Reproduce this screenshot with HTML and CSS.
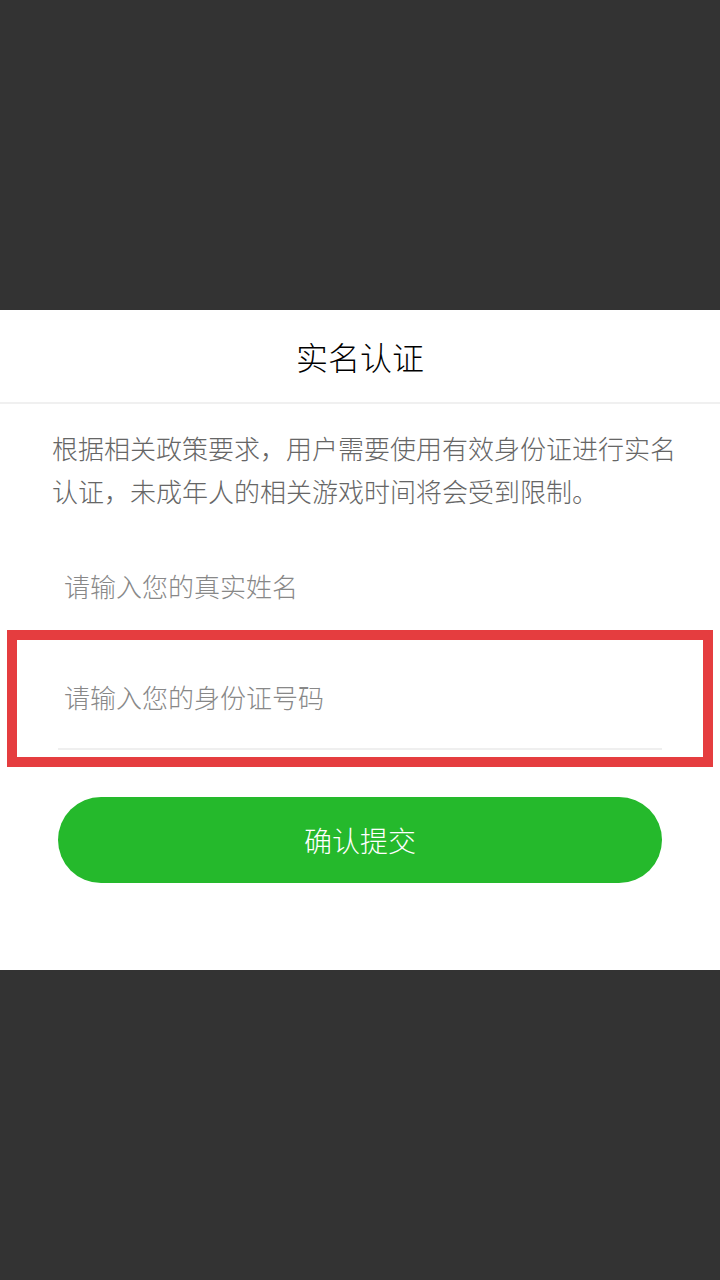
FILE: index.html
```html
<!doctype html>
<html lang="zh-CN">
<head>
    <meta charset="UTF-8" />
    <title>实名认证</title>
    <link rel="stylesheet" href="styles.css">
</head>
<body>

<div class="mask">
	<div class="dialog">
		<div class="dialog-title">实名认证</div>
		<p class="notice">根据相关政策要求，用户需要使用有效身份证进行实名认证，未成年人的相关游戏时间将会受到限制。</p>

		<div class="form">
			<div class="field">
				<input type="text" placeholder="请输入您的真实姓名">
			</div>
			<div class="highlight">
				<div class="field field-line">
					<input type="text" placeholder="请输入您的身份证号码">
				</div>
			</div>
			<button class="submit-btn">确认提交</button>
		</div>
	</div>
</div>

</body>
</html>
```

FILE: styles.css
```css
body {
	margin: 0;
	font-family: "Noto Sans CJK SC", "Noto Sans", sans-serif;
	font-weight: 300;
	background-color: #333333;
}
.mask {
	height: 1280px;
	padding-top: 310px;
	box-sizing: border-box;
}
.dialog {
	background-color: #ffffff;
	padding-bottom: 87px;
}
.dialog-title {
	height: 92px;
	line-height: 92px;
	text-align: center;
	font-size: 32px;
	color: #000000;
	border-bottom: 2px solid #f0f0f0;
}
.notice {
	margin: 0;
	padding: 22px 40px 0 52px;
	font-size: 26px;
	line-height: 43px;
	color: #666666;
}
.form {
	padding: 28px 58px 0 58px;
}
.field {
	height: 90px;
	display: flex;
	align-items: center;
}
.field input {
	width: 100%;
	border: none;
	outline: none;
	padding: 0 0 0 6px;
	font-family: "Noto Sans CJK SC", "Noto Sans", sans-serif;
	font-weight: 300;
	font-size: 26px;
	color: #333333;
	background: transparent;
}
.field input::placeholder {
	color: #888888;
}
.highlight {
	margin: 0 -51px;
	padding: 0 41px 7px 41px;
	border: 10px solid #e53d3f;
}
.field-line {
	height: 103px;
	padding-top: 5px;
	border-bottom: 2px solid #efefef;
}
.submit-btn {
	display: block;
	width: 100%;
	height: 86px;
	margin-top: 30px;
	border: none;
	border-radius: 43px;
	background-color: #25b92c;
	color: #ffffff;
	font-family: "Noto Sans CJK SC", "Noto Sans", sans-serif;
	font-weight: 300;
	font-size: 28px;
}
```
